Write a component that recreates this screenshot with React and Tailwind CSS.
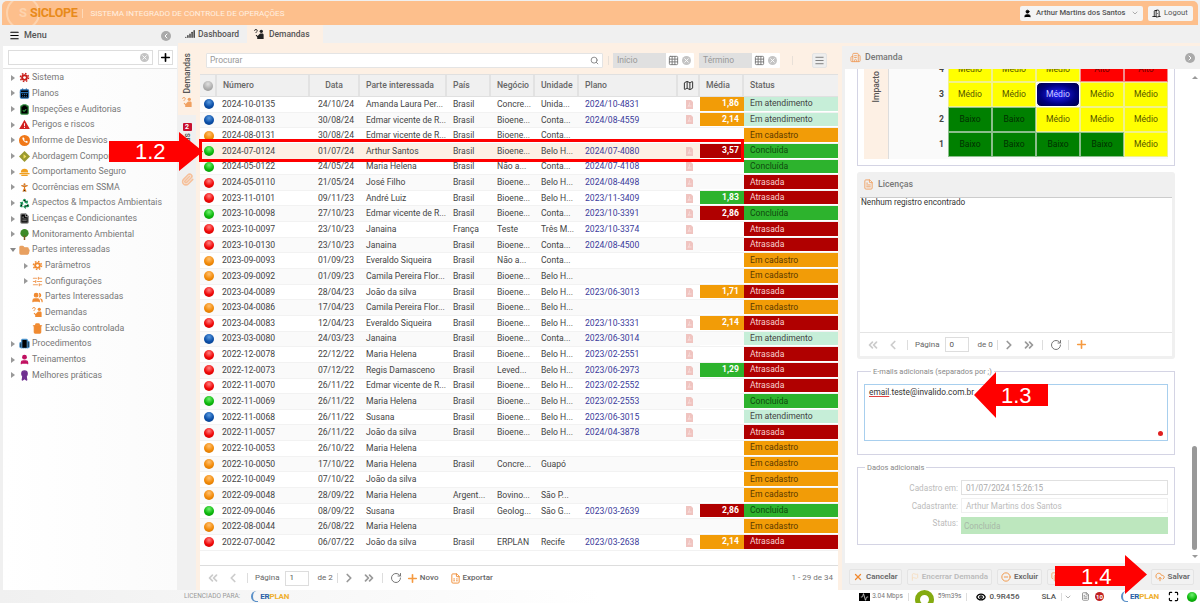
import React from 'react';
import {
  Menu, ChevronLeft, ChevronRight, ChevronsLeft, ChevronsRight, Plus, CalendarDays, ClipboardCheck,
  Recycle, FileText, FolderOpen, SlidersHorizontal, Users, Trash2,
  Building2, User, Award, Search, Grid3x3, X, Signal, MapIcon, RotateCw, CloudUpload, Maximize, Eye, DoorOpen,
  Paperclip, Copy, MinusCircle, Flag, FileSpreadsheet, PersonStanding, ChevronDown, Activity,
} from 'lucide-react';

const balls = {
  b: 'bg-[radial-gradient(circle_at_50%_30%,#5a9be0,#0b4fa8_55%,#063a80)]',
  o: 'bg-[radial-gradient(circle_at_50%_30%,#ffc070,#f28a08_55%,#c96f00)]',
  g: 'bg-[radial-gradient(circle_at_50%_30%,#70f070,#0cb80c_55%,#078a07)]',
  r: 'bg-[radial-gradient(circle_at_50%_30%,#ff8080,#f00808_55%,#c00000)]',
  x: 'bg-[radial-gradient(circle_at_50%_30%,#e0e0e0,#b0b0b0_55%,#909090)]',
};

const statusColor = {
  'Em atendimento': 'bg-[#c6eed8] text-[#444]',
  'Em cadastro': 'bg-[#f29c07] text-[#5a3a00]',
  'Concluída': 'bg-[#2db32d] text-[#0f4a0f]',
  'Atrasada': 'bg-[#b00000] text-[#f6d0d0]',
};

const mediaColor = { o: 'bg-[#f29c07]', r: 'bg-[#b00000]', g: 'bg-[#2db32d]' };

const E = 'Em atendimento';
const C = 'Em cadastro';
const K = 'Concluída';
const A = 'Atrasada';

const rows = [
  ['b', '2024-10-0135', '24/10/24', 'Amanda Laura Per...', 'Brasil', 'Concre...', 'Unida...', '2024/10-4831', '1,86', 'o', E],
  ['b', '2024-08-0133', '30/08/24', 'Edmar vicente de R...', 'Brasil', 'Bioene...', 'Conta...', '2024/08-4559', '2,14', 'o', E],
  ['o', '2024-08-0131', '30/08/24', 'Edmar vicente de R...', 'Brasil', 'Bioene...', 'Conta...', '', '', '', C],
  ['g', '2024-07-0124', '01/07/24', 'Arthur Santos', 'Brasil', 'Bioene...', 'Belo H...', '2024/07-4080', '3,57', 'r', K],
  ['g', '2024-05-0122', '24/05/24', 'Maria Helena', 'Brasil', 'Não a...', 'Conta...', '2024/07-4108', '', '', K],
  ['r', '2024-05-0110', '21/05/24', 'José Filho', 'Brasil', 'Bioene...', 'Belo H...', '2024/08-4498', '', '', A],
  ['r', '2023-11-0101', '09/11/23', 'André Luiz', 'Brasil', 'Bioene...', 'Belo H...', '2023/11-3409', '1,83', 'g', A],
  ['g', '2023-10-0098', '27/10/23', 'Edmar vicente de R...', 'Brasil', 'Bioene...', 'Conta...', '2023/10-3391', '2,86', 'r', K],
  ['r', '2023-10-0097', '23/10/23', 'Janaina', 'França', 'Teste', 'Três M...', '2023/10-3374', '', '', A],
  ['r', '2023-10-0130', '23/10/23', 'Janaina', 'Brasil', 'Bioene...', 'Conta...', '2024/08-4500', '', '', A],
  ['o', '2023-09-0093', '01/09/23', 'Everaldo Siqueira', 'Brasil', 'Não a...', 'Conta...', '', '', '', C],
  ['o', '2023-09-0092', '01/09/23', 'Camila Pereira Flor...', 'Brasil', 'Bioene...', 'Belo H...', '', '', '', C],
  ['r', '2023-04-0089', '28/04/23', 'João da silva', 'Brasil', 'Bioene...', 'Belo H...', '2023/06-3013', '1,71', 'o', A],
  ['o', '2023-04-0086', '17/04/23', 'Camila Pereira Flor...', 'Brasil', 'Bioene...', 'Belo H...', '', '', '', C],
  ['r', '2023-04-0083', '12/04/23', 'Everaldo Siqueira', 'Brasil', 'Bioene...', 'Belo H...', '2023/10-3331', '2,14', 'o', A],
  ['b', '2023-03-0080', '24/03/23', 'Janaina', 'Brasil', 'Bioene...', 'Conta...', '2023/06-3014', '', '', E],
  ['r', '2022-12-0078', '22/12/22', 'Maria Helena', 'Brasil', 'Bioene...', 'Belo H...', '2023/02-2551', '', '', A],
  ['r', '2022-12-0073', '07/12/22', 'Regis Damasceno', 'Brasil', 'Leved...', 'Belo H...', '2023/06-2973', '1,29', 'g', A],
  ['r', '2022-11-0070', '26/11/22', 'Edmar vicente de R...', 'Brasil', 'Bioene...', 'Belo H...', '2023/02-2552', '', '', A],
  ['g', '2022-11-0069', '26/11/22', 'Maria Helena', 'Brasil', 'Bioene...', 'Belo H...', '2023/02-2553', '', '', K],
  ['b', '2022-11-0068', '26/11/22', 'Susana', 'Brasil', 'Bioene...', 'Belo H...', '2023/06-3015', '', '', E],
  ['r', '2022-11-0057', '26/11/22', 'João da silva', 'Brasil', 'Bioene...', 'Belo H...', '2024/04-3878', '', '', A],
  ['o', '2022-10-0053', '26/10/22', 'Maria Helena', '', '', '', '', '', '', C],
  ['o', '2022-10-0050', '17/10/22', 'Maria Helena', 'Brasil', 'Concre...', 'Guapó', '', '', '', C],
  ['o', '2022-10-0049', '07/10/22', 'João da silva', '', '', '', '', '', '', C],
  ['o', '2022-09-0048', '28/09/22', 'Maria Helena', 'Argent...', 'Bovino...', 'São P...', '', '', '', C],
  ['g', '2022-09-0046', '08/09/22', 'Susana', 'Brasil', 'Geolog...', 'São G...', '2023/03-2639', '2,86', 'r', K],
  ['o', '2022-08-0044', '26/08/22', 'Maria Helena', '', '', '', '', '', '', C],
  ['r', '2022-07-0042', '06/07/22', 'João da silva', 'Brasil', 'ERPLAN', 'Recife', '2023/03-2638', '2,14', 'o', A],
];

// icones cheios do menu, que o lucide nao tem nesse desenho
const Gear = ({ className }) => (
  <svg viewBox="0 0 12 12" className={className}>
    <circle cx="6" cy="6" r="3.600" fill="currentColor" />
    <circle cx="6" cy="6" r="4.400" stroke="currentColor" strokeWidth="1.600" strokeDasharray="1.700 1.755" fill="none" />
    <circle cx="6" cy="6" r="1.500" fill="white" />
  </svg>
);

const Alert = ({ className }) => (
  <svg viewBox="0 0 12 12" className={className}>
    <path d="M6 .8 11.800 11H.2z" fill="currentColor" />
    <path d="M5.500 4.500h1v3.500h-1zM5.500 8.800h1v1h-1z" fill="white" />
  </svg>
);

const PhoneBadge = ({ className }) => (
  <svg viewBox="0 0 12 12" className={className}>
    <circle cx="6" cy="6" r="6" fill="currentColor" />
    <path d="M3.500 3c.5 3 2.500 5 5.500 5.700l.6-1.500-1.800-.9-.7.7c-.8-.4-1.300-1-1.600-1.700l.7-.7-.9-1.800z" fill="white" />
  </svg>
);

const DiamondBadge = ({ className }) => (
  <svg viewBox="0 0 12 12" className={className}>
    <path d="M6 0 12 6 6 12 0 6z" fill="currentColor" />
    <path d="M5 3.500 8 6 5 8.500z" fill="#f4e060" />
  </svg>
);

const Hat = ({ className }) => (
  <svg viewBox="0 0 12 12" className={className}>
    <path d="M2 7a4 4 0 0 1 8 0z" fill="currentColor" />
    <path d="M.5 7.500h11v1.500H.5zM2.500 9.500h7V11h-7z" fill="currentColor" />
  </svg>
);

const Tree = ({ className }) => (
  <svg viewBox="0 0 12 12" className={className}>
    <circle cx="6" cy="4.500" r="4.500" fill="currentColor" />
    <path d="M5.200 7h1.600v5H5.200z" fill="#7a5a20" />
  </svg>
);

// pessoa com interrogacao: aba e item Demandas
const Asking = ({ className }) => (
  <svg viewBox="0 0 12 12" className={className}>
    <circle cx="8" cy="2.500" r="1.800" fill="currentColor" />
    <path d="M4 7.500 5.500 6c.5-.7 1-1.200 2-1.200h1.500c1 0 1.500.6 1.500 1.500V11H3.500V8.700L1.800 7l.8-.8z" fill="currentColor" />
    <path d="M.6 2c0-2 3-2 3 0 0 1-1.500 1-1.500 2.400" stroke="currentColor" strokeWidth="1" fill="none" />
  </svg>
);

const menuItems = [
  { label: 'Sistema', Icon: Gear, color: 'text-[#c8201c]', arrow: true },
  { label: 'Planos', Icon: CalendarDays, color: 'text-[#2a6fb0]', arrow: true },
  { label: 'Inspeções e Auditorias', Icon: ClipboardCheck, color: 'text-[#2c8a3a]', arrow: true },
  { label: 'Perigos e riscos', Icon: Alert, color: 'text-[#d32020]', arrow: true },
  { label: 'Informe de Desvios', Icon: PhoneBadge, color: 'text-[#f07818]', arrow: true },
  { label: 'Abordagem Comportamental', Icon: DiamondBadge, color: 'text-[#9a9a30]', arrow: true },
  { label: 'Comportamento Seguro', Icon: Hat, color: 'text-[#f0a020]', arrow: true },
  { label: 'Ocorrências em SSMA', Icon: PersonStanding, color: 'text-[#e07818]', arrow: true },
  { label: 'Aspectos & Impactos Ambientais', Icon: Recycle, color: 'text-[#20a060]', arrow: true },
  { label: 'Licenças e Condicionantes', Icon: FileText, color: 'text-[#808080]', arrow: true },
  { label: 'Monitoramento Ambiental', Icon: Tree, color: 'text-[#3c8a28]', arrow: true },
  { label: 'Partes interessadas', Icon: FolderOpen, color: 'text-[#e8a060]', open: true, filled: true },
  { label: 'Parâmetros', Icon: Gear, color: 'text-[#f08a30]', arrow: true, sub: true },
  { label: 'Configurações', Icon: SlidersHorizontal, color: 'text-[#f0a060]', arrow: true, sub: true },
  { label: 'Partes Interessadas', Icon: Users, color: 'text-[#f08a30]', sub: true, filled: true },
  { label: 'Demandas', Icon: Asking, color: 'text-[#f08a30]', sub: true },
  { label: 'Exclusão controlada', Icon: Trash2, color: 'text-[#f08a30]', sub: true, filled: true },
  { label: 'Procedimentos', Icon: Building2, color: 'text-[#4a90c8]', arrow: true },
  { label: 'Treinamentos', Icon: User, color: 'text-[#c01060]', arrow: true, filled: true },
  { label: 'Melhores práticas', Icon: Award, color: 'text-[#703090]', arrow: true, filled: true },
];

const matrix = [
  ['Médio', 'Médio', 'Médio', 'Alto', 'Alto'],
  ['Médio', 'Médio', 'sel', 'Médio', 'Médio'],
  ['Baixo', 'Baixo', 'Médio', 'Médio', 'Médio'],
  ['Baixo', 'Baixo', 'Baixo', 'Baixo', 'Médio'],
];

const riskColor = {
  Médio: 'bg-[#ffff00] text-[#555500]',
  Baixo: 'bg-[#008000] text-[#003000]',
  Alto: 'bg-[#ff0000] text-[#700000]',
};

const Ball = ({ c }) => <span className={`block w-[10px] h-[10px] rounded-full ${balls[c]}`} />;

const Caret = ({ open }) => (
  <svg width="6" height="6" viewBox="0 0 6 6" className="shrink-0">
    {open ? <polygon points="0,1 6,1 3,5" fill="#888" /> : <polygon points="1,0 5,3 1,6" fill="#999" />}
  </svg>
);

const Pdf = () => (
  <svg width="7" height="9" viewBox="0 0 7 9">
    <path d="M0 0h5l2 2v7H0z" fill="#f0c4c0" />
    <path d="M2 6.500c1-1 1.500-2.500 1.500-4M2 6h3.500" stroke="#fbe8e6" strokeWidth="0.7" fill="none" />
  </svg>
);

const Clear = () => (
  <span className="w-[9px] h-[9px] rounded-full bg-[#c4c4c4] flex items-center justify-center">
    <X className="w-[7px] h-[7px] text-white" strokeWidth={3} />
  </span>
);

// the pagination strip is the same in the list and in the Licenças panel
const Pager = ({ page, total, children }) => (
  <div className="flex items-center h-full text-[8px] text-[#666]">
    <ChevronsLeft className="w-[14px] h-[14px] ml-[6px] text-[#ccc]" strokeWidth={3} />
    <ChevronLeft className="w-[14px] h-[14px] ml-[6px] text-[#ccc]" strokeWidth={3} />
    <span className="w-px h-[10px] bg-[#ddd] ml-[7px]" />
    <span className="ml-[7px]">Página</span>
    <span className="ml-[5px] w-[24px] h-[15px] border border-[#ddd] bg-white flex items-center pl-[4px] text-[#555]">{page}</span>
    <span className="ml-[9px]">de {total}</span>
    <span className="w-px h-[10px] bg-[#ddd] ml-[4px]" />
    <ChevronRight className="w-[14px] h-[14px] ml-[4px] text-[#999]" strokeWidth={3} />
    <ChevronsRight className="w-[14px] h-[14px] ml-[6px] text-[#999]" strokeWidth={3} />
    <span className="w-px h-[10px] bg-[#ddd] ml-[6px]" />
    <RotateCw className="w-[12px] h-[12px] ml-[7px] text-[#777]" />
    {children}
  </div>
);

const Head = ({ w, children, center }) => (
  <div className={`${w} shrink-0 h-full flex items-center border-r-2 border-[#e2e2e2] ${center ? 'justify-center' : 'pl-[6px]'}`}>
    {children}
  </div>
);

const ActionBtn = ({ children, dim }) => (
  <div className={`h-[16px] flex items-center gap-[3px] px-[3px] rounded-[2px] bg-[#f2f2f2] border border-[#e4e4e4] text-[8px] font-semibold whitespace-nowrap ${dim ? 'text-[#bbb]' : 'text-[#666]'}`}>
    {children}
  </div>
);

const Logo = () => (
  <span className="flex items-center gap-[2px]">
    <span className="w-[7px] h-[11px] border-l-2 border-b border-[#5a90c8] rounded-bl-full rounded-tl-full" />
    <span className="text-[8px] font-bold tracking-tight">
      <span className="text-[#2a5fa8]">ER</span><span className="text-[#f0b030]">PLAN</span>
    </span>
  </span>
);

const App = () => {
  return (
    <div className="relative w-[1200px] h-[603px] overflow-hidden flex flex-col bg-[#f0f0f0] font-[Roboto,sans-serif]">
      {/* topo */}
      <div className="shrink-0 h-[24px] mt-[1px] mx-[2px] bg-[#fdbf8c] rounded-t-[5px] flex items-center overflow-hidden">
        <div className="w-[34px] h-[34px] ml-[4px] rounded-full border-2 border-[#fdd3ae] shrink-0 flex items-center justify-center text-[13px] font-bold text-[#fdd3ae]">S</div>
        <span className="-ml-[10px] text-[12.5px] font-bold text-[#e88a1a] tracking-tight">SICLOPE</span>
        <span className="w-px h-[9px] bg-[#fdd9b8] ml-[5px]" />
        <span className="ml-[7px] text-[8.1px] text-[#fff0e2]">SISTEMA INTEGRADO DE CONTROLE DE OPERAÇÕES</span>
        <div className="ml-auto h-[15px] w-[123px] bg-[#f4f4f4] rounded-[2px] flex items-center text-[7.6px] text-[#555] whitespace-nowrap">
          <User className="w-[9px] h-[9px] ml-[3px] text-black" fill="black" />
          <span className="ml-[4px] font-medium">Arthur Martins dos Santos</span>
          <ChevronDown className="w-[8px] h-[8px] ml-auto mr-[4px] text-[#888]" />
        </div>
        <div className="ml-[5px] mr-[5px] h-[15px] w-[45px] bg-[#f4f4f4] rounded-[2px] flex items-center text-[7.6px] text-[#555]">
          <DoorOpen className="w-[9px] h-[9px] ml-[4px] text-black" />
          <span className="ml-[3px]">Logout</span>
        </div>
      </div>

      <div className="flex-1 flex min-h-0">
        {/* menu lateral */}
        <div className="w-[178px] shrink-0 flex flex-col pl-[3px] pr-px">
          <div className="h-[21px] flex items-center text-[9px] font-medium text-[#555]">
            <Menu className="w-[11px] h-[11px] ml-[6px] text-black" strokeWidth={2.5} />
            <span className="ml-[4px]">Menu</span>
            <span className="ml-auto mr-[6px] w-[10px] h-[10px] rounded-full bg-[#aaa] flex items-center justify-center">
              <ChevronLeft className="w-[8px] h-[8px] text-white" strokeWidth={3} />
            </span>
          </div>
          <div className="h-[23px] bg-white flex items-center border-b border-[#e4e4e4]">
            <div className="ml-[5px] w-[145px] h-[15px] border border-[#ddd] flex items-center">
              <span className="ml-auto mr-[3px]"><Clear /></span>
            </div>
            <div className="ml-[5px] w-[15px] h-[15px] border border-[#ddd] flex items-center justify-center">
              <Plus className="w-[13px] h-[13px] text-black" strokeWidth={3} />
            </div>
          </div>
          <div className="flex-1 bg-gradient-to-r from-white to-[#fbfbfb] pt-[1px] text-[8.8px] text-[#777]">
            {menuItems.map((item) => (
              <div key={item.label} className={`h-[15.66px] flex items-center whitespace-nowrap overflow-hidden ${item.sub ? 'pl-[20px]' : 'pl-[7px]'}`}>
                <span className="w-[6px] shrink-0">{(item.arrow || item.open) && <Caret open={item.open} />}</span>
                <item.Icon className={`w-[11px] h-[11px] ml-[3px] mr-px shrink-0 ${item.color}`} strokeWidth={2.5} fill={item.filled ? 'currentColor' : undefined} />
                <span className="ml-[1px]">{item.label}</span>
              </div>
            ))}
          </div>
        </div>

        {/* centro */}
        <div className="w-[667px] shrink-0 flex flex-col">
          <div className="h-[18px] shrink-0 flex text-[8.5px] font-medium text-[#555]">
            <div className="w-[69px] flex items-center pl-[7px] gap-[3px]">
              <Signal className="w-[10px] h-[10px] text-[#222]" strokeWidth={3} />
              Dashboard
            </div>
            <div className="w-[76px] bg-[#fdf0e4] flex items-center pl-[7px] gap-[4px]">
              <Asking className="w-[11px] h-[11px] text-[#222]" />
              Demandas
            </div>
          </div>
          <div className="h-[3px] shrink-0 bg-[#fdf0e4]" />
          <div className="flex-1 flex min-h-0">
            <div className="w-[18px] shrink-0 flex flex-col items-center text-[8.5px] font-medium text-[#555]">
              <div className="w-full h-[69px] bg-[#fdf0e4] flex flex-col items-center justify-end pb-[7px] gap-[3px]">
                <span className="[writing-mode:vertical-rl] rotate-180">Demandas</span>
                <Asking className="w-[11px] h-[11px] text-[#f0a060]" />
              </div>
              <div className="mt-[8px] flex flex-col items-center gap-[2px]">
                <span className="w-[9px] h-[8px] bg-[#c8102e] rounded-[1px] text-white text-[7px] font-bold flex items-center justify-center">2</span>
                <span className="[writing-mode:vertical-rl] rotate-180">Etapas</span>
              </div>
              <Paperclip className="mt-[14px] w-[13px] h-[13px] text-[#f6c09a]" strokeWidth={3} />
            </div>
            <div className="w-[646px] shrink-0 bg-[#fdf0e4] flex flex-col">
              {/* filtros */}
              <div className="h-[28px] shrink-0 flex items-center text-[8.5px] text-[#999] pr-[15px]">
                <div className="ml-[10px] w-[397px] h-[15px] bg-white border border-[#e4e4e4] rounded-[1px] flex items-center px-[3px]">
                  Procurar
                  <Search className="ml-auto w-[9px] h-[9px] text-[#888]" strokeWidth={2.5} />
                </div>
                <span className="w-px h-[9px] bg-[#e8e0d8] ml-[5px]" />
                <div className="ml-[4px] w-[81px] h-[15px] bg-white rounded-[1px] flex items-center">
                  <span className="w-[53px] h-full bg-[#e0e0e0] flex items-center pl-[4px]">Início</span>
                  <Grid3x3 className="ml-[2px] w-[11px] h-[11px] text-[#777]" />
                  <span className="ml-[3px]"><Clear /></span>
                </div>
                <div className="ml-[5px] w-[81px] h-[15px] bg-white rounded-[1px] flex items-center">
                  <span className="w-[53px] h-full bg-[#e0e0e0] flex items-center pl-[4px]">Término</span>
                  <Grid3x3 className="ml-[2px] w-[11px] h-[11px] text-[#777]" />
                  <span className="ml-[3px]"><Clear /></span>
                </div>
                <span className="w-px h-[9px] bg-[#e8e0d8] ml-[12px]" />
                <div className="ml-auto w-[15px] h-[15px] bg-[#eee] border border-[#e4e4e4] rounded-[2px] flex items-center justify-center">
                  <Menu className="w-[11px] h-[11px] text-[#777]" />
                </div>
              </div>

              {/* tabela */}
              <div className="ml-[4px] w-[638px] flex-1 min-h-0 bg-white flex flex-col text-[8.6px] text-[#444]">
                <div className="h-[23px] shrink-0 flex bg-[#f0f0f0] border-y border-[#e0e0e0] text-[#666] font-medium">
                  <Head w="w-[17px]" center><Ball c="x" /></Head>
                  <Head w="w-[93px]">Número</Head>
                  <Head w="w-[50px]" center>Data</Head>
                  <Head w="w-[87px]">Parte interessada</Head>
                  <Head w="w-[44px]">País</Head>
                  <Head w="w-[44px]">Negócio</Head>
                  <Head w="w-[44px]">Unidade</Head>
                  <Head w="w-[99px]">Plano</Head>
                  <Head w="w-[22px]" center><MapIcon className="w-[11px] h-[11px] text-[#222]" /></Head>
                  <Head w="w-[44px]">Média</Head>
                  <div className="flex-1 flex items-center pl-[6px]">Status</div>
                </div>
                {rows.map((r, i) => (
                  <div key={r[1]} className={`h-[15.65px] shrink-0 flex items-center border-b border-[#f2f2f2] whitespace-nowrap ${r[1] === '2024-07-0124' ? 'bg-[#fdf0e4]' : i % 2 ? 'bg-[#fafafa]' : 'bg-white'}`}>
                    <span className="w-[17px] shrink-0 flex justify-center"><Ball c={r[0]} /></span>
                    <span className="w-[93px] shrink-0 pl-[5px]">{r[1]}</span>
                    <span className="w-[50px] shrink-0 text-center pl-[2px]">{r[2]}</span>
                    <span className="w-[87px] shrink-0 pl-[6px] overflow-hidden">{r[3]}</span>
                    <span className="w-[44px] shrink-0 pl-[6px]">{r[4]}</span>
                    <span className="w-[44px] shrink-0 pl-[6px]">{r[5]}</span>
                    <span className="w-[44px] shrink-0 pl-[6px]">{r[6]}</span>
                    <span className="w-[99px] shrink-0 pl-[6px] text-[#3b3b9b]">{r[7]}</span>
                    <span className="w-[22px] shrink-0 flex justify-center">{r[7] && <Pdf />}</span>
                    <span className={`w-[44px] h-full shrink-0 flex items-center justify-end pr-[5px] font-bold text-white border-b border-white ${r[9] ? mediaColor[r[9]] : ''}`}>{r[8]}</span>
                    <span className={`flex-1 h-full flex items-center pl-[6px] border-b border-white ${statusColor[r[10]]}`}>{r[10]}</span>
                  </div>
                ))}
                <div className="flex-1" />
                <div className="h-[25px] shrink-0 border-t border-[#ddd]">
                  <Pager page="1" total="2">
                    <Plus className="w-[13px] h-[13px] ml-[4px] text-[#f59a40]" strokeWidth={3} />
                    <span className="ml-px font-medium">Novo</span>
                    <FileSpreadsheet className="w-[11px] h-[11px] ml-[12px] text-[#f08a30]" />
                    <span className="ml-px font-medium">Exportar</span>
                    <span className="ml-auto mr-[5px] text-[#777]">1 - 29 de 34</span>
                  </Pager>
                </div>
              </div>
            </div>
          </div>
        </div>

        {/* painel Demanda */}
        <div className="flex-1 flex flex-col min-w-0">
          <div className="h-[18px] shrink-0" />
          <div className="h-[3px] shrink-0 bg-[#fdf0e4]" />
          <div className="h-[23px] shrink-0 flex items-center text-[8.8px] font-medium text-[#777]">
            <Building2 className="w-[11px] h-[11px] ml-[5px] text-[#f0a060]" />
            <span className="ml-[4px]">Demanda</span>
            <span className="ml-auto mr-[5px] w-[10px] h-[10px] rounded-full bg-[#aaa] flex items-center justify-center">
              <ChevronRight className="w-[8px] h-[8px] text-white" strokeWidth={3} />
            </span>
          </div>
          <div className="h-[494px] shrink-0 bg-white flex overflow-hidden">
            <div className="w-[340px] shrink-0 pl-[12px] pr-[10px] text-[8.6px] text-[#444]">
              <fieldset className="border border-[#d4d4e4] -mt-[13px] h-[110px] px-[6px]">
                <div className="flex h-[102px]">
                  <div className="w-[25px] bg-[#fdf0e4] border-r border-[#ddd] flex justify-center pt-[14px]">
                    <span className="[writing-mode:vertical-rl] rotate-180 h-fit text-[#555] font-medium">Impacto</span>
                  </div>
                  <div className="flex-1 bg-[#fafafa]">
                    {matrix.map((row, i) => (
                      <div key={i} className="flex h-[25px]">
                        <span className="flex-1 flex items-center justify-end pr-[4px] font-bold text-[#444]">{4 - i}</span>
                        {row.map((cell, j) => (
                          cell === 'sel' ? (
                            <span key={j} className="w-[44px] flex items-center justify-center rounded-[5px] border border-white text-[#c8c8ff] bg-[radial-gradient(ellipse_at_center,#2222ff,#000080_60%,#000040)]">Médio</span>
                          ) : (
                            <span key={j} className={`w-[44px] flex items-center justify-center border border-[#e8e8e8]/60 ${riskColor[cell]}`}>{cell}</span>
                          )
                        ))}
                      </div>
                    ))}
                  </div>
                </div>
              </fieldset>

              <div className="mt-[6px] h-[187px] bg-[#f0f0f0] rounded-[3px] flex flex-col px-[3px] pb-[3px]">
                <div className="h-[25px] shrink-0 flex items-center text-[8.8px] font-medium text-[#777]">
                  <FileText className="w-[11px] h-[11px] ml-[3px] text-[#f0a060]" />
                  <span className="ml-[4px]">Licenças</span>
                </div>
                <div className="flex-1 bg-white border-t border-[#ccc] pl-[1px] text-[8.2px] leading-[8px] text-[#333]">Nenhum registro encontrado</div>
                <div className="h-[24px] shrink-0 bg-white border-t border-[#e4e4e4]">
                  <Pager page="0" total="0">
                    <span className="w-px h-[10px] bg-[#ddd] ml-[6px]" />
                    <Plus className="w-[13px] h-[13px] ml-[6px] text-[#f59a40]" strokeWidth={3} />
                  </Pager>
                </div>
              </div>

              <fieldset className="mt-[7px] h-[89px] border border-[#d4d4e4] px-[6px] pb-[12px]">
                <legend className="ml-[7px] px-[2px] text-[7.5px] text-[#888]">E-mails adicionais (separados por ;)</legend>
                <div className="mt-[7px] relative h-[57px] border border-[#a8cfee] pl-[4px] pt-[1px] text-[8.3px] text-[#333]">
                  <span className="underline decoration-[#e04040]">email</span>.teste@invalido.com.br
                  <span className="absolute right-[4px] bottom-[4px] w-[5px] h-[5px] rounded-full bg-[#e02020]" />
                </div>
              </fieldset>

              <fieldset className="mt-[7px] h-[83px] border border-[#d4d4e4] pr-[6px] text-[8.2px]">
                <legend className="ml-[7px] px-[2px] text-[7.5px] text-[#888]">Dados adicionais</legend>
                <div className="mt-[7px] flex items-center h-[15px]">
                  <span className="w-[100px] text-right text-[#bbb]">Cadastro em:</span>
                  <span className="ml-[3px] flex-1 h-full border border-[#e0e0e0] flex items-center pl-[4px] text-[#aaa]">01/07/2024 15:26:15</span>
                </div>
                <div className="mt-[3px] flex items-center h-[15px]">
                  <span className="w-[100px] text-right text-[#bbb]">Cadastrante:</span>
                  <span className="ml-[3px] flex-1 h-full border border-[#f0f0f0] flex items-center pl-[4px] text-[#bbb]">Arthur Martins dos Santos</span>
                </div>
                <div className="mt-[4px] flex h-[17px]">
                  <span className="w-[100px] text-right text-[#bbb]">Status:</span>
                  <span className="ml-[3px] flex-1 h-full bg-[#bde7be] flex items-center pl-[3px] text-[#a8b8a8]">Concluída</span>
                </div>
              </fieldset>
            </div>
            <div className="flex-1 flex flex-col items-center pt-[7px] pl-[4px]">
              <span className="w-0 h-0 border-x-[3px] border-x-transparent border-b-[3px] border-b-[#999]" />
              <span className="mt-[367px] w-[5px] h-[104px] rounded-full bg-[#999]" />
              <span className="mt-[5px] w-0 h-0 border-x-[3px] border-x-transparent border-t-[3px] border-t-[#999]" />
            </div>
          </div>
          <div className="flex-1 flex items-center pl-[4px] gap-[5px]">
            <ActionBtn><X className="w-[10px] h-[10px] text-[#f08a30]" strokeWidth={3} />Cancelar</ActionBtn>
            <ActionBtn dim><Flag className="w-[8px] h-[8px] text-[#f8d8b0]" />Encerrar Demanda</ActionBtn>
            <ActionBtn><MinusCircle className="w-[10px] h-[10px] text-[#f08a30]" />Excluir</ActionBtn>
            <ActionBtn><Copy className="w-[10px] h-[10px] text-[#f0a060]" />Copiar</ActionBtn>
            <span className="ml-auto mr-[6px]">
              <ActionBtn><CloudUpload className="w-[10px] h-[10px] text-[#f08a30]" />Salvar</ActionBtn>
            </span>
          </div>
        </div>
      </div>

      {/* rodapé */}
      <div className="h-[13px] shrink-0 flex items-center bg-gradient-to-r from-[#f0f0f0] via-white to-white text-[6.5px] text-[#999] overflow-hidden">
        <span className="ml-[184px]">LICENCIADO PARA:</span>
        <span className="ml-[11px]"><Logo /></span>
        <span className="ml-auto flex items-center text-[6.5px]">
          <Activity className="w-[11px] h-[8px] bg-black text-white" />
          <span className="ml-[2px] text-[#777]">3.04 Mbps</span>
          <span className="w-px h-[8px] bg-[#ddd] ml-[5px]" />
          <span className="ml-[6px] w-[19px] h-[19px] mt-[6px] rounded-full border-[5px] border-[#84ab10]" />
          <span className="ml-[4px] text-[#777]">59m39s</span>
          <span className="w-px h-[8px] bg-[#ddd] ml-[5px]" />
          <Eye className="w-[10px] h-[10px] ml-[9px] text-black" strokeWidth={3} />
          <span className="ml-[3px] text-[8px] font-medium text-[#555]">0.9R456</span>
          <span className="ml-[22px] text-[8px] font-medium text-[#555]">SLA</span>
          <span className="w-px h-[8px] bg-[#ddd] ml-[5px]" />
          <ChevronDown className="w-[8px] h-[8px] ml-[2px] text-[#888]" />
          <FileText className="w-[9px] h-[9px] ml-[9px] text-[#777]" />
          <span className="ml-[5px] w-[9px] h-[9px] rounded-full bg-[#c02020] text-white text-[6px] font-bold flex items-center justify-center">10</span>
          <span className="ml-[17px]"><Logo /></span>
          <Maximize className="w-[11px] h-[11px] ml-[9px] text-black" strokeWidth={2.5} />
          <span className="ml-[8px] mr-[3px]"><Ball c="g" /></span>
        </span>
      </div>

      {/* marcações do manual sobre a tela */}
      <div className="absolute left-[199px] top-[139px] w-[545px] h-[23px] border-[3px] border-[#ff0000] pointer-events-none" />
      <div className="absolute left-[109px] top-[132px] w-[94px] h-[39px] text-white">
        <svg width="94" height="39" viewBox="0 0 94 39" className="absolute inset-0">
          <polygon points="0,9 70,9 70,0 94,19.500 70,39 70,30 0,30" fill="#ff0000" />
        </svg>
        <span className="absolute left-[26px] top-[6px] text-[22px] leading-[27px] font-['Liberation_Sans',sans-serif]">1.2</span>
      </div>
      <div className="absolute left-[974px] top-[372px] w-[74px] h-[46px] text-white">
        <svg width="74" height="46" viewBox="0 0 74 46" className="absolute inset-0">
          <polygon points="0,23 22,0 22,12 74,12 74,34 22,34 22,46" fill="#ff0000" />
        </svg>
        <span className="absolute left-[27px] top-[10px] text-[22px] leading-[27px] font-['Liberation_Sans',sans-serif]">1.3</span>
      </div>
      <div className="absolute left-[1055px] top-[555px] w-[92px] h-[39px] text-white">
        <svg width="92" height="39" viewBox="0 0 92 39" className="absolute inset-0">
          <polygon points="0,11 70,11 70,0 92,19.500 70,39 70,31 0,31" fill="#ff0000" />
        </svg>
        <span className="absolute left-[26px] top-[8px] text-[22px] leading-[27px] font-['Liberation_Sans',sans-serif]">1.4</span>
      </div>
    </div>
  );
};

export default App;
